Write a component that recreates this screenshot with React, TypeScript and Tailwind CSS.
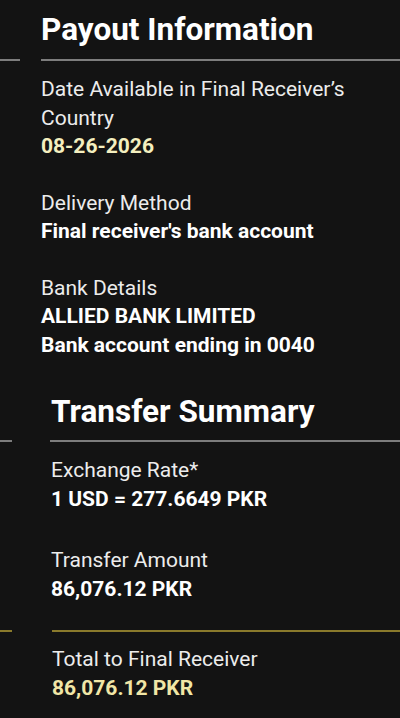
import React from "react";

export default function App() {
  return (
    <div
      className="w-[400px] h-[718px] overflow-hidden bg-[#131313] text-[#ececec]"
      style={{ fontFamily: "Roboto, 'Noto Sans', sans-serif" }}
    >
      {/* Payout Information */}
      <div className="pt-[10px]">
        <h1 className="pl-[41px] text-[31.5px] leading-[40px] font-bold text-white">Payout Information</h1>
        <div className="mt-[9px]">
          <div className="flex gap-[21px]">
            <div className="w-[20px] h-[2px] bg-[#7d7d7d]" />
            <div className="flex-1 h-[2px] bg-[#7d7d7d]" />
          </div>
        </div>
        <div className="pl-[41px] pt-[14px] text-[21px] leading-[28.5px] flex flex-col gap-[28px]">
          <div>
            <div>Date Available in Final Receiver’s</div>
            <div>Country</div>
            <div className="font-bold text-[#f4efbf]">08-26-2026</div>
          </div>
          <div>
            <div>Delivery Method</div>
            <div className="font-bold text-white">Final receiver's bank account</div>
          </div>
          <div>
            <div>Bank Details</div>
            <div className="font-bold text-white">ALLIED BANK LIMITED</div>
            <div className="font-bold text-white">Bank account ending in 0040</div>
          </div>
        </div>
      </div>

      {/* Transfer Summary */}
      <div className="pt-[33px]">
        <h2 className="pl-[51px] text-[31.5px] leading-[40px] font-bold text-white">Transfer Summary</h2>
        <div className="mt-[8px]">
          <div className="flex gap-[38px]">
            <div className="w-[12px] h-[2px] bg-[#7d7d7d]" />
            <div className="flex-1 h-[2px] bg-[#7d7d7d]" />
          </div>
        </div>
        <div className="pl-[51px] pt-[14px] text-[21px] leading-[28.5px] flex flex-col gap-[33px]">
          <div>
            <div>Exchange Rate*</div>
            <div className="font-bold text-white">1 USD = 277.6649 PKR</div>
          </div>
          <div>
            <div>Transfer Amount</div>
            <div className="font-bold text-white">86,076.12 PKR</div>
          </div>
        </div>
        <div className="mt-[27px]">
          <div className="flex gap-[40px]">
            <div className="w-[12px] h-[2px] bg-[#8a7a2c]" />
            <div className="flex-1 h-[2px] bg-[#8a7a2c]" />
          </div>
        </div>
        <div className="pl-[52px] pt-[13px] text-[21px] leading-[28.5px]">
          <div>Total to Final Receiver</div>
          <div className="font-bold text-[#f1e6a6]">86,076.12 PKR</div>
        </div>
      </div>
    </div>
  );
}
